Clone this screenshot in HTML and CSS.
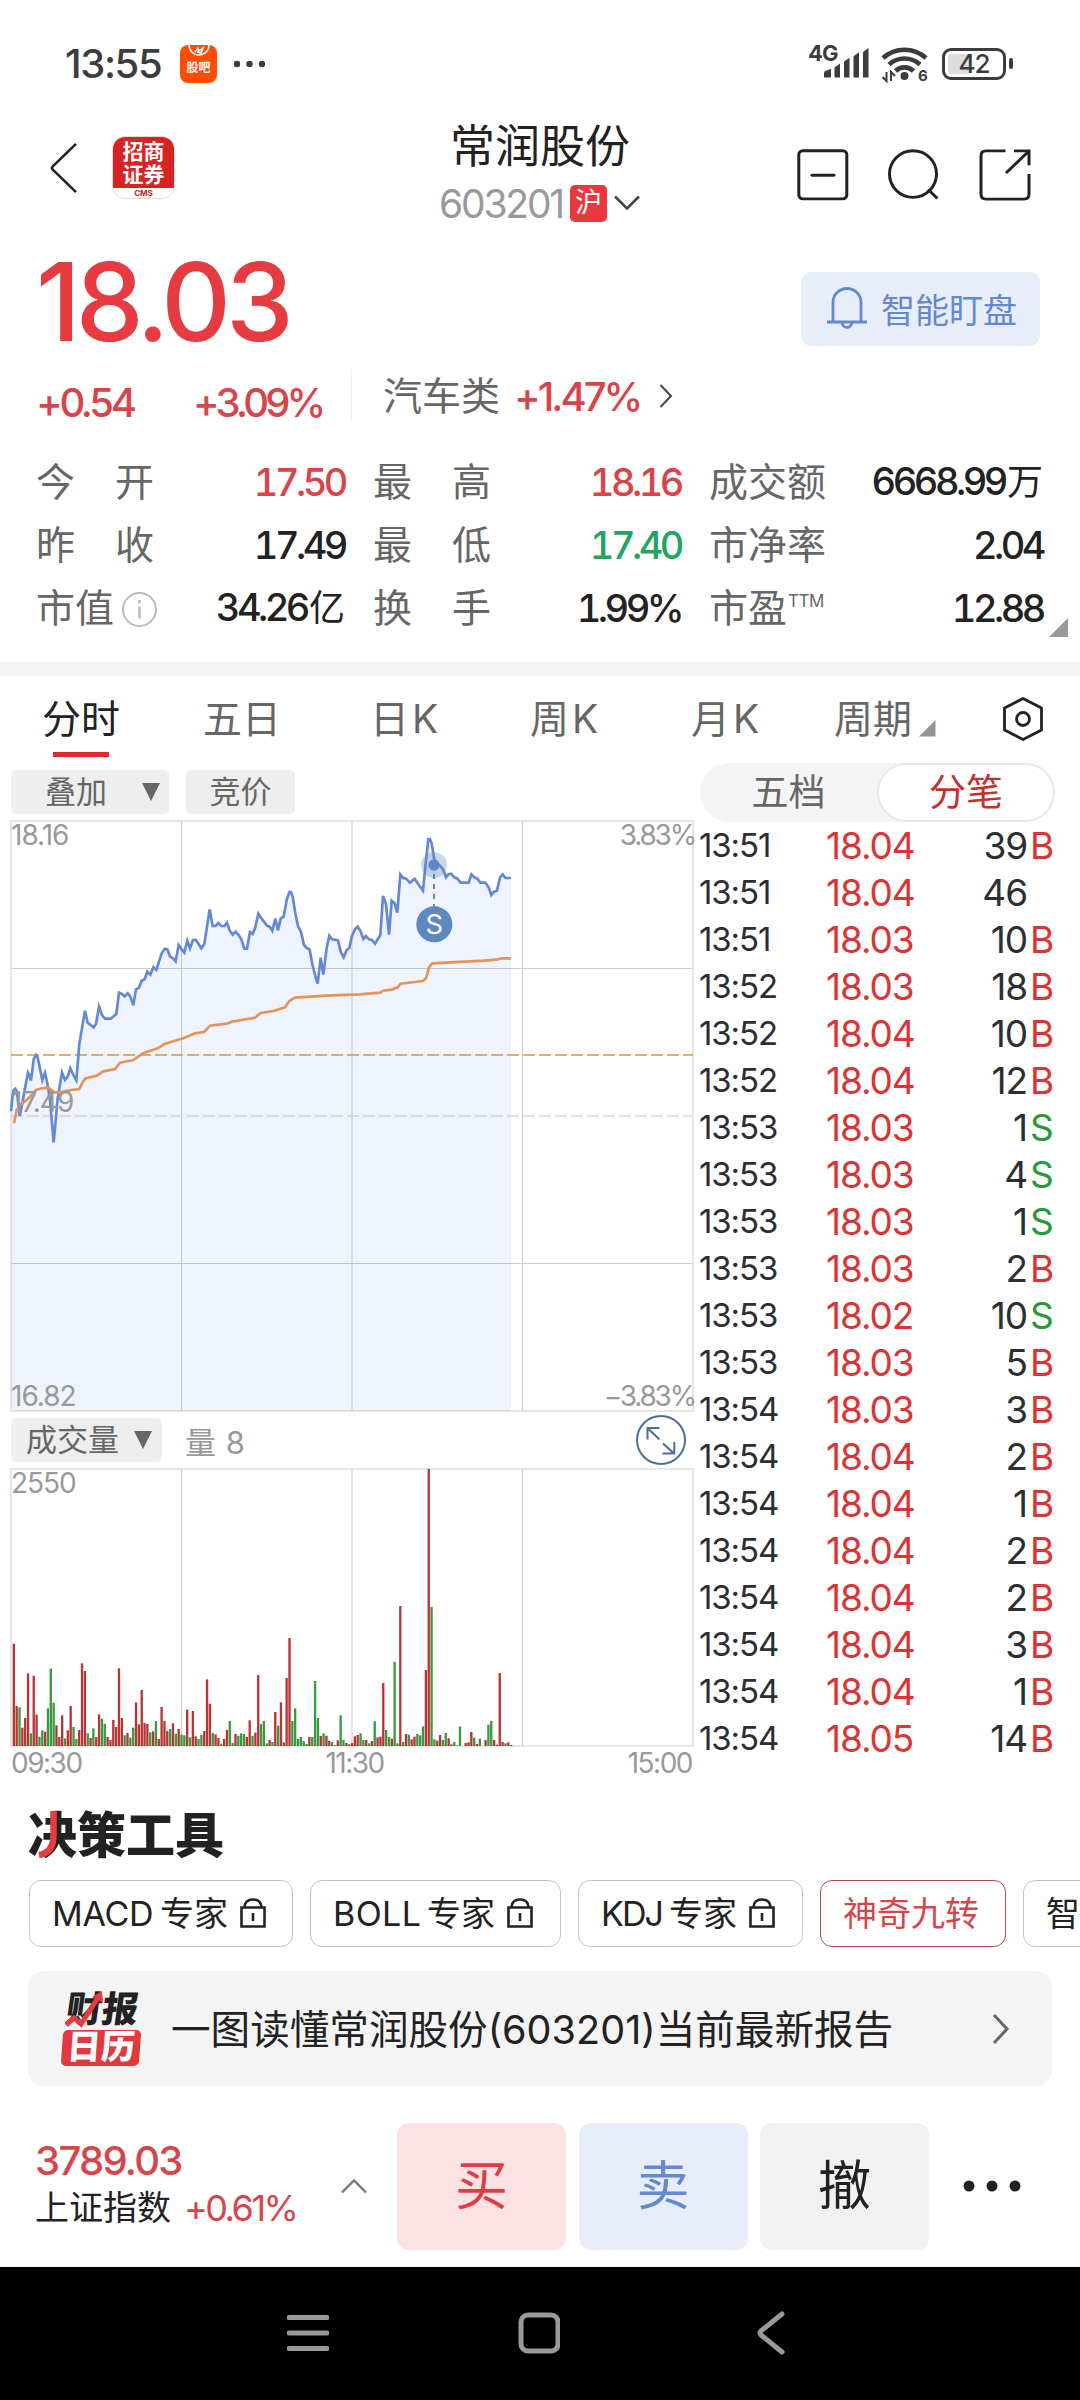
FILE: index.html
```html
<!DOCTYPE html>
<html lang="zh-CN">
<head>
<meta charset="utf-8">
<title>常润股份 603201</title>
<link rel="stylesheet" href="styles.css">
</head>
<body>
<div class="screen">
  <div class="status">
    <span class="clock">13:55</span>
    <span class="app-badge"><svg class="badge-arc" width="22" height="14" viewBox="0 0 22 14"><path d="M1 0a10 10 0 0 0 20 0M7 7l3-4 1 3 4-3-2 5-4-1" fill="none" stroke="#fff" stroke-width="1.5"/></svg><b>股吧</b></span>
    <svg class="dots" width="34" height="8" viewBox="0 0 34 8" fill="#3c3c3c"><circle cx="4" cy="4" r="3.2"/><circle cx="16.500" cy="4" r="3.200"/><circle cx="29" cy="4" r="3.200"/></svg>
    <span class="net">4G</span>
    <svg class="signal" width="46" height="31" viewBox="0 0 46 32" preserveAspectRatio="none" fill="#3c3c3c"><path d="M0 26q0-2 2-2.500l5-2v9H0zM10.500 20l5.500-4v14.500h-5.500zM20 14l5.500-4v20.500H20zM29.500 8.500l5.500-4v26h-5.500zM39 4l5.500-4v30.500H39z"/></svg>
    <svg class="wifi" width="48" height="38" viewBox="0 0 48 38" fill="none" stroke="#3c3c3c"><path d="M2 13a32 32 0 0 1 43 0M8 19.500a23 23 0 0 1 31 0M14.500 26a13 13 0 0 1 18 0" stroke-width="4.600"/><circle cx="23.500" cy="31" r="4" fill="#3c3c3c" stroke="none"/><path d="M5.500 27v9l-4-4M10 36v-9l4 4" stroke-width="2"/><text x="37" y="36" class="wifi-gen">6</text></svg>
    <span class="battery"><i></i><em>42</em></span><span class="battery-tip"></span>
  </div>

  <header class="header">
    <svg class="back" width="28" height="52" viewBox="0 0 28 54" preserveAspectRatio="none"><path d="M26 2L3 25q-2 2 0 4l23 23" fill="none" stroke="#222" stroke-width="2.600"/></svg>
    <div class="broker"><span>招商<br>证券</span><small>CMS</small></div>
    <div class="title">
      <h1>常润股份</h1>
      <div class="code"><span>603201</span><b>沪</b><svg width="28" height="18" viewBox="0 0 28 18"><path d="M2 2.500l12 12 12-12" fill="none" stroke="#444" stroke-width="2.600"/></svg></div>
    </div>
    <div class="actions">
      <svg width="52" height="52" viewBox="0 0 52 54" preserveAspectRatio="none"><rect x="1.800" y="1.800" width="48" height="50" rx="4"/><path d="M15 27.300h22" stroke-linecap="round"/></svg>
      <svg width="52" height="52" viewBox="0 0 52 54" preserveAspectRatio="none"><ellipse cx="25" cy="26" rx="23.500" ry="24.200"/><path d="M40 42l9.500 9.500"/></svg>
      <svg width="52" height="52" viewBox="0 0 52 54" preserveAspectRatio="none"><path d="M26.500 2H7Q2 2 2 7v40q0 5 5 5h38q5 0 5-5V26M35 2h15v15M50 2L27 25"/></svg>
    </div>
  </header>

  <section class="quote">
    <div class="price-row">
      <div class="price">18.03</div>
      <div class="watch">
        <svg width="42" height="44" viewBox="0 0 42 44" fill="none" stroke="#6489cc" stroke-width="2.800"><path d="M1 36h40M7 36V16.500a14 14 0 0 1 28 0V36M16 36a5 5.500 0 0 0 10 0"/></svg>
        <span>智能盯盘</span>
      </div>
    </div>
    <div class="change-row">
      <span class="chg">+0.54</span><span class="pct">+3.09%</span>
      <div class="sector"><span class="sector-name">汽车类</span><span class="sector-pct">+1.47%</span><svg width="14" height="26" viewBox="0 0 14 26"><path d="M1.500 2L12 13 1.500 24" fill="none" stroke="#444" stroke-width="2"/></svg></div>
    </div>
    <div class="stats">
      <span class="lab wide"><i>今</i><i>开</i></span><span class="val up">17.50</span><span class="lab wide"><i>最</i><i>高</i></span><span class="val up">18.16</span><span class="lab">成交额</span><span class="val">6668.99<u>万</u></span>
      <span class="lab wide"><i>昨</i><i>收</i></span><span class="val">17.49</span><span class="lab wide"><i>最</i><i>低</i></span><span class="val down">17.40</span><span class="lab">市净率</span><span class="val">2.04</span>
      <span class="lab">市值<svg width="37" height="37" viewBox="0 0 37 37" fill="none" stroke="#bbb" stroke-width="2"><circle cx="18.500" cy="18.500" r="16.500"/><path d="M18.500 15.500v12M18.500 9v3.500" stroke-width="2.600"/></svg></span><span class="val">34.26<u>亿</u></span><span class="lab wide"><i>换</i><i>手</i></span><span class="val">1.99%</span><span class="lab">市盈<sup>TTM</sup></span><span class="val">12.88</span>
      <svg class="corner" width="20" height="20" viewBox="0 0 20 20"><path d="M19 0v19H0z" fill="#999"/></svg>
    </div>
  </section>

  <nav class="tabs">
    <span class="tab on">分时</span><span class="tab">五日</span><span class="tab k">日K</span><span class="tab k">周K</span><span class="tab k">月K</span><span class="tab">周期</span>
    <svg class="tab-tri" width="17" height="17" viewBox="0 0 17 17"><path d="M16.500 0v16.500H0z" fill="#9b9090"/></svg>
    <svg class="gear" width="42" height="46" viewBox="0 0 42 46" fill="none" stroke="#222" stroke-width="2.800"><path d="M21 2.500L39.500 12v22L21 43.500 2.500 34V12z" stroke-linejoin="round"/><circle cx="21" cy="23" r="6.500"/></svg>
  </nav>

  <main class="market">
    <div class="charts">
      <div class="tools"><span class="btn overlay">叠加<svg width="18" height="18" viewBox="0 0 18 18"><path d="M0 0h18L9 18z" fill="#666"/></svg></span><span class="btn auction">竞价</span></div>
      <div class="plot price-plot">
        <svg width="684" height="592" viewBox="30 240 2052 1776">
          <g class="frame"><path d="M33 243H2079V2013H33zM1056 243V2013"/></g>
          <g class="thin"><path d="M544.500 243V2013M1567.500 243V2013M33 685.500H2079M33 1570.500H2079"/></g>
          <path class="prev" d="M33 1128H2079"/>
          <path class="cost" d="M33 945H2079"/>
          <path id="area" class="area"/>
          <polyline id="line" class="line"/>
          <polyline class="avg" points="42,1150 50,1110 60,1095 80,1080 95,1065 108,1050 125,1045 145,1043 165,1058 190,1055 215,1050 238,1047 246,1030 256,1015 290,1007 310,994 345,987 360,968 400,960 428,940 475,924 495,911 550,895 585,880 612,876 630,857 680,851 695,845 765,833 782,819 820,813 855,802 868,783 885,773 980,767 1080,763 1140,758 1150,752 1175,749 1193,742 1202,731 1268,723 1278,715 1288,680 1297,670 1350,667 1450,662 1490,659 1505,655 1533,655"/>
          <circle cx="1302" cy="375" r="39" fill="#5e88c0" fill-opacity=".33"/>
          <circle cx="1302" cy="375" r="17" fill="#5e88c0"/>
          <path d="M1302 402V500" stroke="#5e88c0" stroke-width="6" stroke-dasharray="15 15" fill="none"/>
          <circle cx="1303" cy="553" r="54" fill="#5e88c0"/>
          <text x="1303" y="583" class="mark">S</text>
        </svg>
        <span class="ax tl">18.16</span><span class="ax tr">3.83%</span><span class="ax ml">17.49</span><span class="ax bl">16.82</span><span class="ax br">−3.83%</span>
      </div>
      <div class="vol-head">
        <span class="btn volume">成交量<svg width="18" height="18" viewBox="0 0 18 18"><path d="M0 0h18L9 18z" fill="#666"/></svg></span><span class="vol-now">量 8</span>
        <svg class="expand" width="50" height="50" viewBox="0 0 50 50" fill="none" stroke="#4d6f94" stroke-width="2"><circle cx="25" cy="25" r="24"/><path d="M11.500 24.500V13h12M12 13.500l11.500 11M27 28.500l11 10M26.500 38.500h11.800V27"/></svg>
      </div>
      <div class="plot vol-plot">
        <svg width="684" height="279" viewBox="30 324 2052 837">
          <g class="frame"><path d="M33 327H2079V1158H33zM1056 327V1158"/></g>
          <g class="thin"><path d="M544.500 327V1158M1567.500 327V1158"/></g>
          <g id="bars"></g>
        </svg>
        <span class="ax tl">2550</span>
      </div>
      <div class="times"><span>09:30</span><span>11:30</span><span>15:00</span></div>
    </div>

    <aside class="tape">
      <div class="seg"><span>五档</span><span class="on">分笔</span></div>
      <ul>
        <li><time>13:51</time><b>18.04</b><i>39</i><em>B</em></li>
        <li><time>13:51</time><b>18.04</b><i>46</i><em></em></li>
        <li><time>13:51</time><b>18.03</b><i>10</i><em>B</em></li>
        <li><time>13:52</time><b>18.03</b><i>18</i><em>B</em></li>
        <li><time>13:52</time><b>18.04</b><i>10</i><em>B</em></li>
        <li><time>13:52</time><b>18.04</b><i>12</i><em>B</em></li>
        <li><time>13:53</time><b>18.03</b><i>1</i><em class="s">S</em></li>
        <li><time>13:53</time><b>18.03</b><i>4</i><em class="s">S</em></li>
        <li><time>13:53</time><b>18.03</b><i>1</i><em class="s">S</em></li>
        <li><time>13:53</time><b>18.03</b><i>2</i><em>B</em></li>
        <li><time>13:53</time><b>18.02</b><i>10</i><em class="s">S</em></li>
        <li><time>13:53</time><b>18.03</b><i>5</i><em>B</em></li>
        <li><time>13:54</time><b>18.03</b><i>3</i><em>B</em></li>
        <li><time>13:54</time><b>18.04</b><i>2</i><em>B</em></li>
        <li><time>13:54</time><b>18.04</b><i>1</i><em>B</em></li>
        <li><time>13:54</time><b>18.04</b><i>2</i><em>B</em></li>
        <li><time>13:54</time><b>18.04</b><i>2</i><em>B</em></li>
        <li><time>13:54</time><b>18.04</b><i>3</i><em>B</em></li>
        <li><time>13:54</time><b>18.04</b><i>1</i><em>B</em></li>
        <li><time>13:54</time><b>18.05</b><i>14</i><em>B</em></li>
      </ul>
    </aside>
  </main>

  <section class="decision">
    <h2>决策工具<svg class="slash" width="20" height="48" viewBox="0 0 20 48"><path d="M15.500 0V24Q15.500 42 1 44" fill="none" stroke="#e63b40" stroke-width="6.500"/></svg></h2>
    <div class="chips">
      <span class="chip c1"><i>MACD</i>专家<svg width="26" height="30" viewBox="0 0 26 30"><path d="M1.500 9.500h23v19h-23zM4.500 9Q5 1.500 13 1.500T21.500 9M13 15v8"/></svg></span>
      <span class="chip c2"><i>BOLL</i>专家<svg width="26" height="30" viewBox="0 0 26 30"><path d="M1.500 9.500h23v19h-23zM4.500 9Q5 1.500 13 1.500T21.500 9M13 15v8"/></svg></span>
      <span class="chip c3"><i>KDJ</i>专家<svg width="26" height="30" viewBox="0 0 26 30"><path d="M1.500 9.500h23v19h-23zM4.500 9Q5 1.500 13 1.500T21.500 9M13 15v8"/></svg></span>
      <span class="chip c4">神奇九转</span>
      <span class="chip c5">智</span>
    </div>
    <div class="banner">
      <div class="cal"><b>财报</b><strong>日历</strong><svg class="zig" width="40" height="38" viewBox="0 0 40 38"><path d="M1 35l8-7 7 6L33 8" fill="none" stroke="#e63b40" stroke-width="5"/><path d="M27 7l10-6 1 12z" fill="#e63b40"/></svg></div>
      <p>一图读懂常润股份<span>(603201)</span>当前最新报告</p>
      <svg width="18" height="32" viewBox="0 0 18 32"><path d="M2 2l13 14L2 30" fill="none" stroke="#666" stroke-width="3"/></svg>
    </div>
  </section>

  <footer class="trade">
    <div class="index"><b>3789.03</b><div><span>上证指数</span><em>+0.61%</em></div></div>
    <svg class="up-arrow" width="28" height="18" viewBox="0 0 28 18"><path d="M2 15.500l12-12 12 12" fill="none" stroke="#777" stroke-width="2.400"/></svg>
    <span class="act buy">买</span><span class="act sell">卖</span><span class="act cancel">撤</span>
    <svg class="more" width="60" height="14" viewBox="0 0 60 14" fill="#222"><circle cx="7" cy="7" r="5.500"/><circle cx="30" cy="7" r="5.500"/><circle cx="53" cy="7" r="5.500"/></svg>
  </footer>

  <div class="sysnav">
    <svg width="42" height="46" viewBox="0 0 42 46"><path d="M2 7.500h38M2 23h38M2 38.500h38"/></svg>
    <svg width="42" height="46" viewBox="0 0 42 46"><rect x="3" y="5" width="37" height="36" rx="7"/></svg>
    <svg width="42" height="46" viewBox="0 0 42 46"><path d="M33 4L12.500 20.500q-3 2.500 0 5L33 42"/></svg>
  </div>
</div>
<script src="chart.js"></script>
</body>
</html>
```
FILE: chart.js
```js
// Minute prices, in plot units.
const price = "33,1113 38,1065 41,1050 46,1046 51,1055 59,1128 67,1090 75,1045 84,998 88,1005 93,1022 101,958 108,945 113,952 127,1020 135,998 142,1030 150,1080 161,1207 173,1075 186,998 195,1020 203,1010 211,985 220,1005 229,1021 238,912 255,812 263,848 272,855 281,862 288,852 297,800 306,825 315,836 332,836 349,822 357,758 366,762 374,769 383,760 391,770 400,796 408,748 417,743 425,722 434,718 442,695 451,704 460,682 469,690 485,640 494,627 502,628 510,650 519,655 527,664 536,615 545,628 553,638 562,602 570,625 579,600 588,600 604,625 613,612 621,560 629,508 638,558 647,558 655,549 664,558 673,558 681,548 689,572 698,584 707,575 716,585 724,598 733,626 741,626 750,576 758,582 766,562 775,521 784,535 801,557 809,560 817,572 826,536 834,571 842,536 851,530 860,480 868,456 873,456 878,470 886,520 894,558 903,576 912,615 920,624 929,629 937,672 945,705 953,731 962,653 970,704 980,624 988,587 996,598 1014,601 1022,635 1031,652 1040,630 1048,624 1056,587 1065,568 1073,560 1081,572 1090,597 1098,588 1107,598 1116,600 1125,611 1141,585 1149,468 1158,492 1167,584 1175,482 1184,490 1192,518 1201,403 1210,414 1218,416 1230,428 1244,416 1256,434 1269,452 1277,370 1285,297 1290,297 1295,310 1303,360 1312,372 1321,378 1330,390 1338,412 1345,403 1353,401 1363,412 1372,416 1382,428 1406,428 1414,403 1423,412 1432,416 1441,428 1456,428 1466,442 1474,465 1482,455 1491,452 1500,412 1508,403 1516,414 1533,414";
document.getElementById("line").setAttribute("points", price);
document.getElementById("area").setAttribute("d", "M" + price.split(" ").join("L") + "V2013H33Z");

// Minute volumes: r = up, g = down, followed by the bar height.
const volumes = "r307 r120 g116 r55 r84 r218 g38 r211 r94 g28 g47 r43 g113 g232 g130 r62 r27 r92 g23 r47 r120 g57 g21 r48 r248 r225 g38 r24 g53 r27 r95 g82 g67 r27 r18 r78 r57 r233 r84 g32 r39 g25 g55 r131 r65 r168 r69 r66 g41 r44 g75 r21 r117 r75 r45 g51 r68 g37 r51 g34 g32 r109 g26 r105 r29 g21 g33 r45 r200 r127 g39 r35 r24 g7 r21 r48 g75 g9 r36 g31 g38 g36 r27 r77 g31 r40 r213 g66 g75 g8 r18 g12 r102 g61 r131 r11 r204 r324 g75 g113 g21 g27 g15 g6 r27 g27 g195 g84 r30 g38 r31 r15 g12 r2 r17 g92 g18 r9 r5 r9 r29 r33 g38 g18 r18 g8 r15 g74 r26 r28 r189 g48 g27 r22 g253 g8 r420 g12 r36 g34 r20 r28 g36 g32 g59 r228 r831 g417 g20 r16 r33 g18 g39 r23 r5 g12 g2 g59 g0 r9 r11 r42 g25 r6 g22 g0 r18 g64 g75 r18 r4 r219 r12 g8 r11 r3".split(" ");
const bars = document.getElementById("bars");
volumes.forEach((v, i) => {
  const h = Number(v.slice(1));
  const r = document.createElementNS("http://www.w3.org/2000/svg", "rect");
  r.setAttribute("x", (33 + (i + 1) * 8.525 - 3.5).toFixed(1));
  r.setAttribute("y", 1158 - h);
  r.setAttribute("width", 7);
  r.setAttribute("height", h);
  r.setAttribute("class", v[0] === "r" ? "bar-up" : "bar-down");
  bars.appendChild(r);
});
```
FILE: styles.css
```css
* { box-sizing: border-box; }
body { margin: 0; background: #fff; }
.screen {
  width: 1080px; height: 2400px; overflow: hidden; background: #fff; color: #222;
  font-family: Inter, "Noto Sans CJK SC", sans-serif; font-weight: 400;
  display: flex; flex-direction: column;
}
svg { display: block; flex: none; }
h1, h2, p, ul { margin: 0; padding: 0; font-weight: inherit; }
i, em, u { font-style: normal; text-decoration: none; }
span, b, i, em { white-space: nowrap; }

.status { height: 120px; flex: none; padding: 7px 0 0 65px; display: flex; align-items: center; color: #3c3c3c; }
.clock { font-size: 40px; font-weight: 500; letter-spacing: -1.400px; width: 115px; }
.app-badge { width: 37px; height: 38px; border-radius: 8px; background: #ff4d06; color: #fff; display: flex; flex-direction: column; align-items: center; }
.badge-arc { height: 14px; }
.app-badge b { font-size: 12px; line-height: 18px; font-weight: 700; }
.dots { margin-left: 16px; }
.net { margin: -22px 0 0 541px; width: 20px; font-size: 22px; font-weight: 700; letter-spacing: -1px; line-height: 22px; }
.signal { margin-left: -4px; width: 46px; }
.wifi { margin: 0 0 0 11px; width: 48px; overflow: visible; }
.wifi-gen { font: 700 15px Inter, sans-serif; fill: #3c3c3c; stroke: none; }
.battery { margin-left: 13px; width: 64px; height: 32px; border: 3px solid #3c3c3c; border-radius: 9px; position: relative; display: flex; align-items: center; justify-content: center; }
.battery i { position: absolute; left: 3px; top: 3px; bottom: 3px; width: 22px; background: #ddd; border-radius: 3px; }
.battery em { position: relative; font-size: 26px; font-weight: 500; letter-spacing: -1px; }
.battery-tip { width: 4px; height: 11px; margin-left: 3px; border-radius: 2px; background: #3c3c3c; }

.header { height: 110px; flex: none; display: flex; align-items: flex-start; padding-left: 50px; }
.back { margin-top: 22px; }
.broker { margin: 16px 0 0 34px; width: 63px; height: 63px; border: 1px solid #e4dcdc; border-radius: 13px; overflow: hidden; background: #fff; color: #fff; text-align: center; }
.broker span { display: block; height: 51px; background: #d72323; font: 700 21px/23px "Noto Sans CJK SC", sans-serif; padding-top: 2px; }
.broker small { display: block; color: #c22; font: 700 8px/10px Inter, sans-serif; }
.title { width: 260px; margin: -3px 0 0 235px; display: flex; flex-direction: column; align-items: center; }
h1 { font-size: 45px; line-height: 60px; font-weight: 400; }
.code { display: flex; align-items: center; height: 60px; margin-top: -4px; color: #999; font-size: 39px; letter-spacing: -2.200px; }
.code b { width: 37px; height: 37px; margin: 0 6px 0 7px; border-radius: 5px; background: #e8393f; color: #fff; font-size: 27px; line-height: 35px; font-weight: 400; text-align: center; letter-spacing: 0; }
.actions { margin: 29px 0 0 127px; display: flex; gap: 39px; }
.actions svg { fill: none; stroke: #222; stroke-width: 3; }

.quote { height: 432px; flex: none; }
.price-row { height: 138px; display: flex; justify-content: space-between; padding: 0 40px 0 36px; }
.price { margin-top: -8px; font-size: 108px; line-height: 160px; height: 138px; font-weight: 500; letter-spacing: -5px; color: #e63b40; }
.watch { margin-top: 42px; width: 239px; height: 74px; padding: 0 0 2px 25px; border-radius: 11px; background: #e7edf9; color: #6489cc; display: flex; align-items: center; gap: 13px; font-size: 34px; font-weight: 400; }
.change-row { height: 70px; display: flex; color: #d8444a; font-size: 40px; font-weight: 500; letter-spacing: -3px; padding-left: 36px; }
.chg { width: 157px; line-height: 70px; letter-spacing: -3.300px; }
.pct { width: 158px; line-height: 70px; letter-spacing: -3.800px; }
.sector { height: 53px; margin-top: 1px; padding-left: 31px; border-left: 1px solid #eee; display: flex; align-items: center; line-height: 53px; }
.sector-name { width: 131px; color: #666; font-size: 39px; font-weight: 400; letter-spacing: 0; }
.sector-pct { width: 145px; padding-top: 2px; }
.stats { position: relative; padding: 12px 36px 0 36px; display: grid; grid-template-columns: 118px 192px 144px 165px 123px 1fr; grid-auto-rows: 63px; align-items: center; }
.stats .lab:nth-child(6n+3) { margin-left: 27px; }
.stats .lab:nth-child(6n+5) { margin-left: 54px; }
.stats .lab:nth-child(6n+5), .stats .lab:nth-child(6n+3) { margin-right: -60px; }
.lab { color: #666; font-size: 39px; display: flex; align-items: center; line-height: 56px; }
.lab.wide { width: 118px; justify-content: space-between; }
.lab svg { margin: 3px 0 0 7px; }
.lab sup { font-size: 17px; line-height: 20px; margin: -14px 0 0 1px; letter-spacing: -.5px; }
.val { text-align: right; font-size: 38px; font-weight: 500; letter-spacing: -3.500px; line-height: 56px; font-variant-numeric: tabular-nums; padding-right: 1px; }
.stats .val:nth-child(6n+4) { margin-right: -27px; }
.val u { font-size: 36px; font-weight: 400; letter-spacing: 0; margin-left: 2px; }
.up { color: #d8444a; } .down { color: #22a560; }
.corner { position: absolute; left: 1049px; top: 180px; }

.tabs { height: 101px; flex: none; border-top: 14px solid #f2f3f5; padding-left: 42px; display: flex; align-items: flex-start; color: #666; font-size: 39px; line-height: 86px; }
.tab { position: relative; width: 161px; }
.tab.k { letter-spacing: 3px; }
.tab:nth-child(2) { width: 167px; } .tab:nth-child(3) { width: 160px; }
.tab:nth-child(5) { width: 143px; } .tab:nth-child(6) { width: 79px; }
.tab.on { color: #222; font-weight: 400; }
.tab.on::after { content: ""; position: absolute; left: 11px; top: 76px; width: 56px; height: 5px; background: #dc2a2f; }
.tab-tri { margin: 44px 0 0 6px; }
.gear { margin: 20px 0 0 66px; }

.market { height: 1021px; flex: none; display: flex; padding-left: 10px; }
.charts { width: 690px; }
.tools { display: flex; gap: 17px; padding: 7px 0 0 1px; height: 57px; }
.btn { height: 44px; border-radius: 5px; background: #eee; color: #666; font-size: 31px; display: flex; align-items: center; line-height: 44px; }
.overlay { width: 158px; padding-left: 34px; gap: 35px; }
.auction { width: 109px; justify-content: center; }
.plot { position: relative; }
.frame { fill: none; stroke: #e6e6e6; stroke-width: 6; }
.thin { fill: none; stroke: #ccc; stroke-width: 3; }
.prev, .cost { stroke-width: 6; stroke-dasharray: 36 12; fill: none; }
.prev { stroke: #e2e2e2; } .cost { stroke: #e9b257; }
.area { fill: #5d8af0; fill-opacity: .105; }
.line { fill: none; stroke: #6388d6; stroke-width: 8; }
.avg { fill: none; stroke: #e4945a; stroke-width: 8; }
.bar-up { fill: #b93434; } .bar-down { fill: #379a40; }
.mark { font: 400 82px Inter, sans-serif; fill: #fff; text-anchor: middle; }
.ax { position: absolute; color: #999; font-size: 28px; line-height: 30px; letter-spacing: -1px; }
.tl { left: 1px; top: 0; } .tr { right: 5px; top: 0; } .ml { left: 1px; top: 267px; }
.bl { left: 1px; bottom: 0; } .br { right: 5px; bottom: 0; }
.ax.tr, .ax.br { letter-spacing: -2.200px; }
.price-plot { height: 591px; }
.vol-head { height: 57px; display: flex; align-items: center; padding: 1px 0 0 1px; }
.volume { width: 151px; padding-left: 15px; gap: 15px; }
.vol-now { margin-left: 23px; color: #999; font-size: 31px; letter-spacing: .5px; }
.expand { margin-left: auto; margin-right: 14px; }
.vol-plot { height: 279px; }
.times { display: flex; justify-content: space-between; padding: 0 8px 0 1px; color: #999; font-size: 28px; line-height: 32px; letter-spacing: -1.500px; }

.tape { width: 355px; }
.seg { display: flex; height: 59px; border-radius: 30px; background: #f4f4f4; color: #666; font-size: 37px; line-height: 59px; }
.seg span { width: 177px; text-align: center; }
.seg .on { width: 178px; border: 2px solid #e8e8e8; border-radius: 30px; background: #fff; color: #c4302e; line-height: 55px; }
.tape ul { list-style: none; }
.tape li { display: grid; grid-template-columns: 100px 140px 87px 28px; height: 47px; line-height: 47px; color: #2b2e33; font-size: 37px; letter-spacing: -1.100px; }
.tape time { font-size: 33px; letter-spacing: -1.100px; margin-left: -1px; }
.tape b { font-weight: 400; color: #da3434; padding-left: 26px; }
.tape i { text-align: right; }
.tape em { color: #da3434; padding-left: 3px; }
.tape em.s { color: #26993a; }

.decision { height: 318px; flex: none; padding: 19px 0 0 28px; }
h2 { position: relative; height: 77px; font-size: 49px; line-height: 65px; font-weight: 900; }
.slash { position: absolute; left: 10px; top: 8px; }
.chips { display: flex; gap: 17px; width: 1052px; overflow: hidden; height: 67px; padding-left: 1px; }
.chip { flex: none; height: 67px; border: 1px solid #c4c4c4; border-radius: 12px; padding-left: 22px; display: flex; align-items: center; font-size: 34px; line-height: 50px; }
.chip i { letter-spacing: -.300px; }
.chip svg { fill: none; stroke: #222; stroke-width: 2.600; margin: -2px 0 0 12px; }
.c1 { width: 264px; } .c1 i { width: 108px; }
.c2 { width: 251px; } .c2 i { width: 94px; letter-spacing: .400px; }
.c3 { width: 225px; } .c3 i { width: 68px; letter-spacing: -1.900px; }
.c4 { width: 186px; border-color: #b04a4e; color: #d8444a; }
.c5 { width: 180px; }
.banner { margin-top: 24px; width: 1024px; height: 115px; border-radius: 16px; background: #f4f4f4; display: flex; align-items: center; padding-left: 34px; }
.cal { position: relative; width: 82px; height: 76px; line-height: 36px; }
.cal b { display: block; font-size: 36px; height: 39px; font-weight: 900; transform: skewX(-8deg); padding-left: 4px; }
.cal strong { display: block; width: 78px; height: 36px; border-radius: 5px; background: #e0393f; color: #fff; font-size: 34px; line-height: 34px; font-weight: 900; text-align: center; transform: skewX(-4deg); }
.zig { position: absolute; left: 3px; top: -1px; }
.banner p { width: 848px; padding: 0 0 4px 27px; font-size: 39.600px; font-weight: 400; white-space: nowrap; }
.banner p span { letter-spacing: 0; }

.trade { height: 165px; flex: none; display: flex; align-items: flex-start; padding: 21px 0 0 35px; }
.index { width: 304px; padding-top: 15px; }
.index b { display: block; color: #d8444a; font-size: 40px; line-height: 46px; font-weight: 500; letter-spacing: -1.700px; }
.index div { display: flex; font-size: 34px; line-height: 48px; }
.index span { width: 149px; }
.index em { color: #d8444a; font-size: 36px; letter-spacing: -2.500px; }
.up-arrow { margin: 54px 0 0 1px; }
.act { width: 169px; height: 127px; margin-left: 12.500px; border-radius: 12px; text-align: center; font-size: 53px; line-height: 127px; font-weight: 400; }
.buy { margin-left: 29px; background: #fde1e3; color: #de3e43; }
.sell { background: #e6edf9; color: #6489cc; }
.cancel { background: #f1f1f1; }
.more { margin: 56px 0 0 33px; }
.sysnav { flex: 1; background: #000; display: flex; padding: 43px 0 0 287px; gap: 189px; }
.sysnav svg { fill: none; stroke: #999; stroke-width: 5; stroke-linecap: round; }
```
